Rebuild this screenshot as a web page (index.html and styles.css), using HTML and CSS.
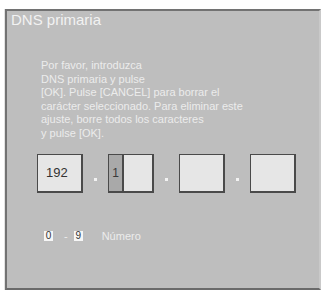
FILE: index.html
```html
<!DOCTYPE html>
<html lang="es">
<head>
<meta charset="utf-8">
<link rel="stylesheet" href="styles.css">
</head>
<body>
<div class="panel">
  <div class="title">DNS primaria</div>
  <p class="msg">Por favor, introduzca<br>DNS primaria y pulse<br>[OK]. Pulse [CANCEL] para borrar el<br>carácter seleccionado. Para eliminar este<br>ajuste, borre todos los caracteres<br>y pulse [OK].</p>
  <div class="fields">
    <div class="box"><span class="val">192</span></div>
    <div class="sep"><span class="dot"></span></div>
    <div class="box edit"><span class="cur">1</span><span class="rest"></span></div>
    <div class="sep"><span class="dot"></span></div>
    <div class="box"></div>
    <div class="sep"><span class="dot"></span></div>
    <div class="box"></div>
  </div>
  <div class="hints">
    <span class="key">0</span>
    <span class="dash">-</span>
    <span class="key">9</span>
    <span class="label">Número</span>
  </div>
</div>
</body>
</html>
```
FILE: styles.css
```css
html, body {
  margin: 0;
  padding: 0;
  background: #ffffff;
}
body {
  padding: 9px 0 0 5px;
  font-family: "Liberation Sans", Arial, sans-serif;
}
.panel {
  box-sizing: border-box;
  width: 316px;
  height: 281px;
  background: #bebebe;
  border-top: 2px solid #727272;
  border-left: 2px solid #727272;
  border-bottom: 2px solid #6a6a6a;
  border-right: 2px solid #c9c9c9;
  box-shadow: -1px 0 0 #e2e2e2;
}
.title {
  margin: 0 0 0 4px;
  font-size: 15px;
  line-height: 18px;
  color: #f2f2f2;
}
.msg {
  margin: 30px 0 0 34px;
  font-size: 11px;
  line-height: 13.6px;
  color: #ececec;
}
.fields {
  display: flex;
  margin: 13px 0 0 30px;
  height: 39px;
}
.box {
  box-sizing: border-box;
  width: 46px;
  height: 39px;
  background: #e6e6e6;
  border: 1px solid #4a4a4a;
  border-right-width: 2px;
  border-bottom-width: 2px;
  display: flex;
  align-items: center;
}
.val {
  margin-left: 8px;
  font-size: 13px;
  color: #333333;
}
.edit {
  align-items: stretch;
}
.cur {
  width: 13px;
  background: #a9a9a9;
  border-right: 2px solid #4a4a4a;
  font-size: 12px;
  color: #3a3a3a;
  display: flex;
  align-items: center;
  justify-content: center;
}
.rest {
  flex: 1;
}
.sep {
  width: 25px;
  display: flex;
  justify-content: center;
  align-items: flex-end;
}
.dot {
  width: 3px;
  height: 3px;
  background: #f2f2f2;
  margin-bottom: 12px;
}
.hints {
  display: flex;
  align-items: center;
  margin: 38px 0 0 37px;
  height: 10px;
  color: #ececec;
  font-size: 11px;
}
.key {
  box-sizing: border-box;
  width: 9px;
  height: 10px;
  background: #f6f6f6;
  color: #333333;
  font-size: 10px;
  line-height: 10px;
  text-align: center;
}
.dash {
  margin: 0 6px 0 11px;
  line-height: 10px;
}
.label {
  margin-left: 19px;
  line-height: 10px;
}
```
